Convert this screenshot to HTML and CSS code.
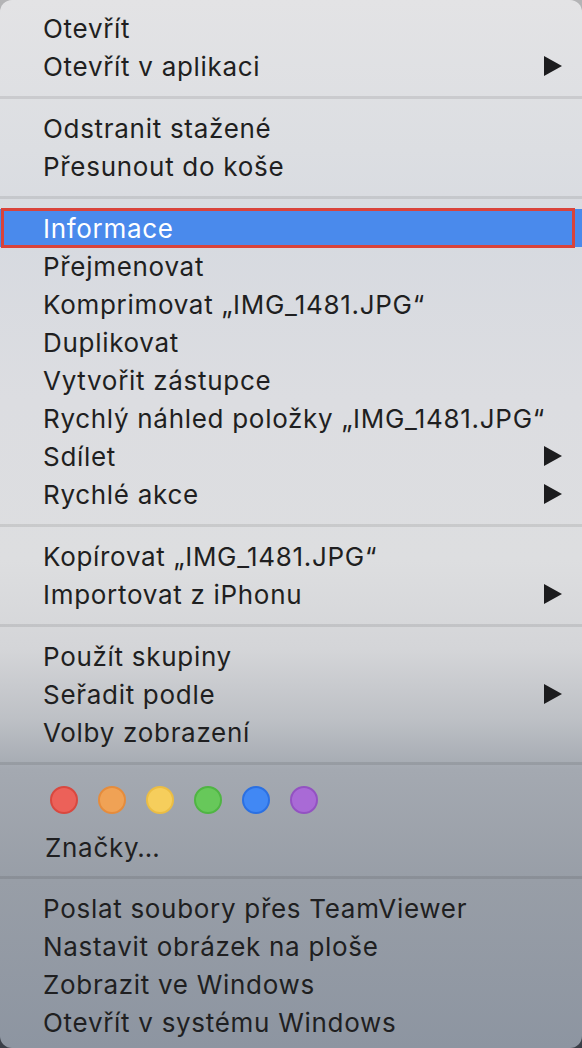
FILE: index.html
```html
<!DOCTYPE html>
<html lang="cs">
<head>
<meta charset="utf-8">
<title>Kontextová nabídka</title>
<link rel="stylesheet" href="styles.css">
</head>
<body>
<div class="menu">
  <div class="item">Otevřít</div>
  <div class="item sub">Otevřít v aplikaci<svg class="arrow" viewBox="0 0 18 20"><polygon points="0,0 18,10 0,20"/></svg></div>
  <div class="sep"></div>
  <div class="item">Odstranit stažené</div>
  <div class="item">Přesunout do koše</div>
  <div class="sep"></div>
  <div class="item active">Informace<span class="mark"></span></div>
  <div class="item">Přejmenovat</div>
  <div class="item">Komprimovat „IMG_1481.JPG“</div>
  <div class="item">Duplikovat</div>
  <div class="item">Vytvořit zástupce</div>
  <div class="item">Rychlý náhled položky „IMG_1481.JPG“</div>
  <div class="item sub">Sdílet<svg class="arrow" viewBox="0 0 18 20"><polygon points="0,0 18,10 0,20"/></svg></div>
  <div class="item sub">Rychlé akce<svg class="arrow" viewBox="0 0 18 20"><polygon points="0,0 18,10 0,20"/></svg></div>
  <div class="sep"></div>
  <div class="item">Kopírovat „IMG_1481.JPG“</div>
  <div class="item sub">Importovat z iPhonu<svg class="arrow" viewBox="0 0 18 20"><polygon points="0,0 18,10 0,20"/></svg></div>
  <div class="sep"></div>
  <div class="item">Použít skupiny</div>
  <div class="item sub">Seřadit podle<svg class="arrow" viewBox="0 0 18 20"><polygon points="0,0 18,10 0,20"/></svg></div>
  <div class="item">Volby zobrazení</div>
  <div class="sep"></div>
  <div class="tags">
    <span class="dot red"></span>
    <span class="dot orange"></span>
    <span class="dot yellow"></span>
    <span class="dot green"></span>
    <span class="dot blue"></span>
    <span class="dot purple"></span>
  </div>
  <div class="item tagsitem">Značky…</div>
  <div class="sep last"></div>
  <div class="item">Poslat soubory přes TeamViewer</div>
  <div class="item">Nastavit obrázek na ploše</div>
  <div class="item">Zobrazit ve Windows</div>
  <div class="item">Otevřít v systému Windows</div>
</div>
</body>
</html>
```

FILE: styles.css
```css
html, body {
  margin: 0;
  padding: 0;
}
body {
  width: 582px;
  height: 1048px;
  overflow: hidden;
  background: linear-gradient(#b4b4b6, #6c717a 70%, #3a3f48);
  font-family: Inter, "Noto Sans", sans-serif;
}
.menu {
  box-sizing: border-box;
  width: 582px;
  height: 1048px;
  padding-top: 9px;
  border-radius: 12px;
  overflow: hidden;
  background: linear-gradient(
    #e3e3e5 0px,
    #dcdee2 150px,
    #d7dae0 240px,
    #dcdde1 400px,
    #dddee0 560px,
    #d4d5d8 650px,
    #bdc0c5 720px,
    #a4a9b1 770px,
    #989ea7 880px,
    #8d95a1 1048px
  );
  color: #1f1f21;
}
.item {
  position: relative;
  display: flex;
  align-items: center;
  justify-content: space-between;
  height: 38px;
  padding: 0 20px 0 43px;
  font-size: 26px;
  letter-spacing: 0.7px;
  white-space: nowrap;
}
.arrow {
  width: 18px;
  height: 20px;
  fill: #1c1c1e;
}
.active {
  background: #4a8aec;
  color: #ffffff;
}
.mark {
  position: absolute;
  left: 1px;
  top: -1px;
  width: 574px;
  height: 40px;
  box-sizing: border-box;
  border: 3px solid #d9433a;
}
.sep {
  height: 3px;
  margin: 11px 0 10px;
  background: rgba(0, 0, 0, 0.09);
}
.sep.last {
  margin: 10px 0 10px;
}
.tags {
  display: flex;
  gap: 20px;
  padding: 11px 0 14px 50px;
}
.dot {
  box-sizing: border-box;
  width: 28px;
  height: 28px;
  border-radius: 50%;
  border: 2px solid;
}
.red { background: #ec6159; border-color: #d9483f; }
.orange { background: #f0a255; border-color: #e58c3c; }
.yellow { background: #f6ce5c; border-color: #ebbd44; }
.green { background: #67c85a; border-color: #4fb543; }
.blue { background: #4188f4; border-color: #2b70e2; }
.purple { background: #a96ad6; border-color: #9352c2; }
.tagsitem {
  padding-left: 45px;
}
```
